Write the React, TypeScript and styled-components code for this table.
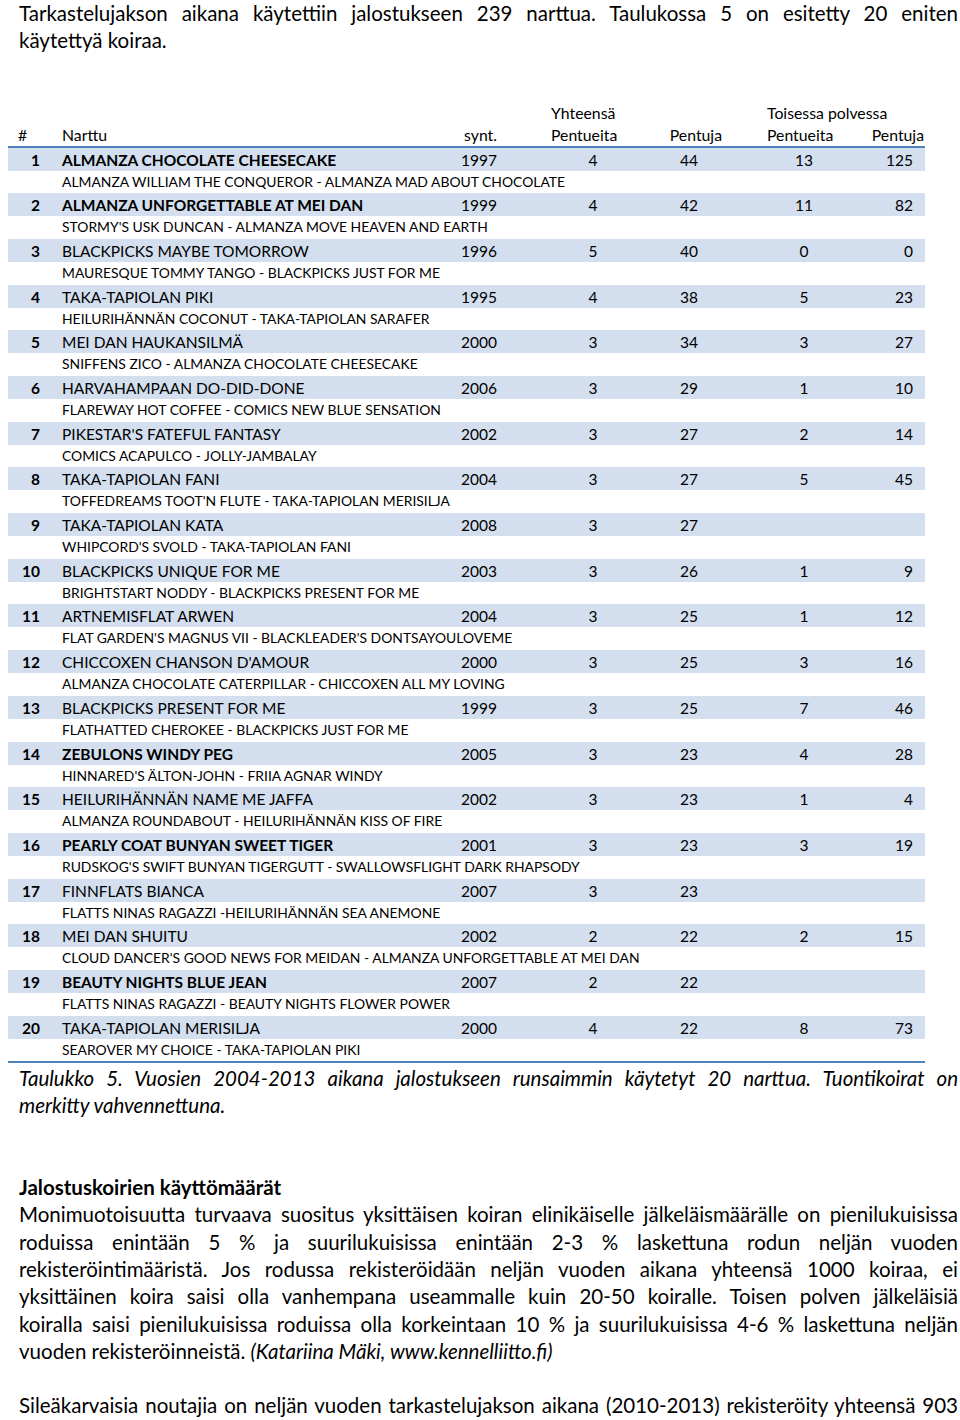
import React from "react";
import styled, { createGlobalStyle } from "styled-components";

const LH = 27.3;

const Global = createGlobalStyle`
  html, body { margin: 0; padding: 0; background: #fff; }
  body { font-family: Lato, "Open Sans", sans-serif; color: #000; }
`;

const Page = styled.div`
  width: 960px;
  display: flex;
  flex-direction: column;
`;

const Para = styled.div<{ $pt?: number }>`
  padding: ${(p) => p.$pt || 0}px 2px 0 19px;
  font-size: 20.5px;
  line-height: ${LH}px;
`;

const Line = styled.div<{ $justify?: boolean; $italic?: boolean; $bold?: boolean }>`
  white-space: nowrap;
  text-align: ${(p) => (p.$justify ? "justify" : "left")};
  text-align-last: ${(p) => (p.$justify ? "justify" : "left")};
  font-style: ${(p) => (p.$italic ? "italic" : "normal")};
  font-weight: ${(p) => (p.$bold ? 700 : 400)};
  height: ${LH}px;
`;

const Blank = styled.div<{ $lines: number }>`
  height: ${(p) => p.$lines * LH}px;
`;

const Table = styled.div`
  margin-left: 8px;
  width: 917px;
  font-size: 15.5px;
  border-bottom: 2px solid #4f81bd;
`;

const cols = "40px 392px 60px 51px 84px 108px 122px 60px";

const Head = styled.div`
  display: grid;
  grid-template-columns: ${cols};
  grid-template-rows: 22px 22px;
  line-height: 22px;
  font-size: 15.8px;
  border-bottom: 2px solid #4f81bd;
  margin-top: 47px;
`;

const HCell = styled.div<{ $col: number; $row: number; $align?: string; $pl?: number; $pr?: number }>`
  grid-column: ${(p) => p.$col};
  grid-row: ${(p) => p.$row};
  text-align: ${(p) => p.$align || "left"};
  padding-left: ${(p) => p.$pl || 0}px;
  padding-right: ${(p) => p.$pr || 0}px;
  white-space: nowrap;
`;

const Main = styled.div<{ $bold?: boolean }>`
  display: grid;
  grid-template-columns: ${cols};
  height: 23px;
  line-height: 24px;
  background: #d3dfee;
  font-weight: ${(p) => (p.$bold ? 700 : 400)};
`;

const Num = styled.div`
  font-weight: 700;
  text-align: right;
  padding-right: 8px;
`;

const Name = styled.div`
  padding-left: 14px;
  white-space: nowrap;
`;

const Spacer = styled.div``;

const Cell = styled.div<{ $align: string; $pr?: number }>`
  text-align: ${(p) => p.$align};
  padding-right: ${(p) => p.$pr || 0}px;
  font-weight: 400;
`;

const Sub = styled.div`
  height: 22.7px;
  line-height: 22.7px;
  padding-left: 54px;
  font-size: 13.9px;
  white-space: nowrap;
`;

type Row = [string, boolean, string, string, string, string, string, string];

const rows: Row[] = [
  ["ALMANZA CHOCOLATE CHEESECAKE", true, "1997", "4", "44", "13", "125", "ALMANZA WILLIAM THE CONQUEROR - ALMANZA MAD ABOUT CHOCOLATE"],
  ["ALMANZA UNFORGETTABLE AT MEI DAN", true, "1999", "4", "42", "11", "82", "STORMY'S USK DUNCAN - ALMANZA MOVE HEAVEN AND EARTH"],
  ["BLACKPICKS MAYBE TOMORROW", false, "1996", "5", "40", "0", "0", "MAURESQUE TOMMY TANGO - BLACKPICKS JUST FOR ME"],
  ["TAKA-TAPIOLAN PIKI", false, "1995", "4", "38", "5", "23", "HEILURIHÄNNÄN COCONUT - TAKA-TAPIOLAN SARAFER"],
  ["MEI DAN HAUKANSILMÄ", false, "2000", "3", "34", "3", "27", "SNIFFENS ZICO - ALMANZA CHOCOLATE CHEESECAKE"],
  ["HARVAHAMPAAN DO-DID-DONE", false, "2006", "3", "29", "1", "10", "FLAREWAY HOT COFFEE - COMICS NEW BLUE SENSATION"],
  ["PIKESTAR'S FATEFUL FANTASY", false, "2002", "3", "27", "2", "14", "COMICS ACAPULCO - JOLLY-JAMBALAY"],
  ["TAKA-TAPIOLAN FANI", false, "2004", "3", "27", "5", "45", "TOFFEDREAMS TOOT'N FLUTE - TAKA-TAPIOLAN MERISILJA"],
  ["TAKA-TAPIOLAN KATA", false, "2008", "3", "27", "", "", "WHIPCORD'S SVOLD - TAKA-TAPIOLAN FANI"],
  ["BLACKPICKS UNIQUE FOR ME", false, "2003", "3", "26", "1", "9", "BRIGHTSTART NODDY - BLACKPICKS PRESENT FOR ME"],
  ["ARTNEMISFLAT ARWEN", false, "2004", "3", "25", "1", "12", "FLAT GARDEN'S MAGNUS VII - BLACKLEADER'S DONTSAYOULOVEME"],
  ["CHICCOXEN CHANSON D'AMOUR", false, "2000", "3", "25", "3", "16", "ALMANZA CHOCOLATE CATERPILLAR - CHICCOXEN ALL MY LOVING"],
  ["BLACKPICKS PRESENT FOR ME", false, "1999", "3", "25", "7", "46", "FLATHATTED CHEROKEE - BLACKPICKS JUST FOR ME"],
  ["ZEBULONS WINDY PEG", true, "2005", "3", "23", "4", "28", "HINNARED'S ÄLTON-JOHN - FRIIA AGNAR WINDY"],
  ["HEILURIHÄNNÄN NAME ME JAFFA", false, "2002", "3", "23", "1", "4", "ALMANZA ROUNDABOUT - HEILURIHÄNNÄN KISS OF FIRE"],
  ["PEARLY COAT BUNYAN SWEET TIGER", true, "2001", "3", "23", "3", "19", "RUDSKOG'S SWIFT BUNYAN TIGERGUTT - SWALLOWSFLIGHT DARK RHAPSODY"],
  ["FINNFLATS BIANCA", false, "2007", "3", "23", "", "", "FLATTS NINAS RAGAZZI -HEILURIHÄNNÄN SEA ANEMONE"],
  ["MEI DAN SHUITU", false, "2002", "2", "22", "2", "15", "CLOUD DANCER'S GOOD NEWS FOR MEIDAN - ALMANZA UNFORGETTABLE AT MEI DAN"],
  ["BEAUTY NIGHTS BLUE JEAN", true, "2007", "2", "22", "", "", "FLATTS NINAS RAGAZZI - BEAUTY NIGHTS FLOWER POWER"],
  ["TAKA-TAPIOLAN MERISILJA", false, "2000", "4", "22", "8", "73", "SEAROVER MY CHOICE - TAKA-TAPIOLAN PIKI"],
];

const Italic = styled.span`
  font-style: italic;
`;

export default function App() {
  return (
    <Page>
      <Global />
      <Para>
        <Line $justify>
          Tarkastelujakson aikana käytettiin jalostukseen 239 narttua. Taulukossa 5 on esitetty 20 eniten
        </Line>
        <Line>käytettyä koiraa.</Line>
      </Para>
      <Table>
        <Head>
          <HCell $col={5} $row={1}>Yhteensä</HCell>
          <HCell $col={7} $row={1} $pl={24}>Toisessa polvessa</HCell>
          <HCell $col={1} $row={2} $pl={10}>#</HCell>
          <HCell $col={2} $row={2} $pl={14}>Narttu</HCell>
          <HCell $col={3} $row={2} $align="right" $pr={3}>synt.</HCell>
          <HCell $col={5} $row={2}>Pentueita</HCell>
          <HCell $col={6} $row={2} $align="right" $pr={21}>Pentuja</HCell>
          <HCell $col={7} $row={2} $pl={24}>Pentueita</HCell>
          <HCell $col={8} $row={2} $align="right" $pr={1}>Pentuja</HCell>
        </Head>
        {rows.map((r, i) => (
          <React.Fragment key={i}>
            <Main $bold={r[1]}>
              <Num>{i + 1}</Num>
              <Name>{r[0]}</Name>
              <Cell $align="right" $pr={3}>{r[2]}</Cell>
              <Spacer />
              <Cell $align="center">{r[3]}</Cell>
              <Cell $align="center">{r[4]}</Cell>
              <Cell $align="center">{r[5]}</Cell>
              <Cell $align="right" $pr={12}>{r[6]}</Cell>
            </Main>
            <Sub>{r[7]}</Sub>
          </React.Fragment>
        ))}
      </Table>
      <Para $pt={1.5}>
        <Line $justify $italic>
          Taulukko 5. Vuosien 2004-2013 aikana jalostukseen runsaimmin käytetyt 20 narttua. Tuontikoirat on
        </Line>
        <Line $italic>merkitty vahvennettuna.</Line>
        <Blank $lines={2} />
        <Line $bold>Jalostuskoirien käyttömäärät</Line>
        <Line $justify>
          Monimuotoisuutta turvaava suositus yksittäisen koiran elinikäiselle jälkeläismäärälle on pienilukuisissa
        </Line>
        <Line $justify>
          roduissa enintään 5 % ja suurilukuisissa enintään 2-3 % laskettuna rodun neljän vuoden
        </Line>
        <Line $justify>
          rekisteröintimääristä. Jos rodussa rekisteröidään neljän vuoden aikana yhteensä 1000 koiraa, ei
        </Line>
        <Line $justify>
          yksittäinen koira saisi olla vanhempana useammalle kuin 20-50 koiralle. Toisen polven jälkeläisiä
        </Line>
        <Line $justify>
          koiralla saisi pienilukuisissa roduissa olla korkeintaan 10 % ja suurilukuisissa 4-6 % laskettuna neljän
        </Line>
        <Line>
          vuoden rekisteröinneistä. <Italic>(Katariina Mäki, www.kennelliitto.fi)</Italic>
        </Line>
        <Blank $lines={1} />
        <Line $justify>
          Sileäkarvaisia noutajia on neljän vuoden tarkastelujakson aikana (2010-2013) rekisteröity yhteensä 903
        </Line>
      </Para>
    </Page>
  );
}
